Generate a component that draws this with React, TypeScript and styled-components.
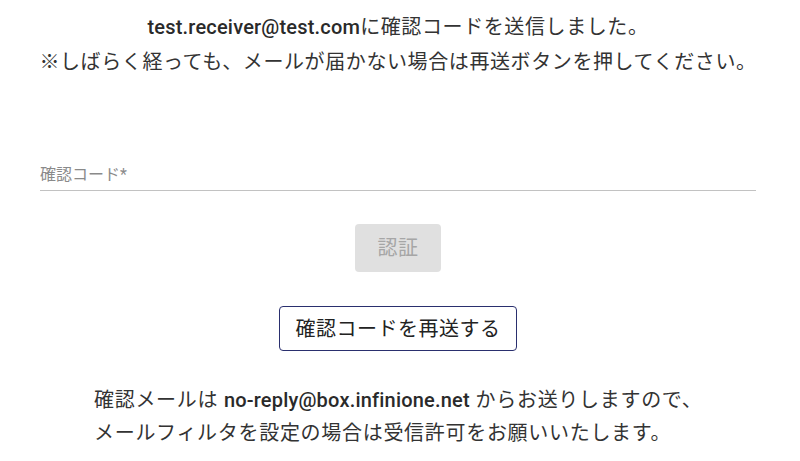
import React, { useState } from "react";
import styled, { createGlobalStyle } from "styled-components";

const GlobalStyle = createGlobalStyle`
  html, body {
    margin: 0;
    padding: 0;
    background: #ffffff;
  }

  body {
    font-family: Roboto, "Noto Sans CJK JP", sans-serif;
    color: #333333;
  }
`;

const Page = styled.div`
  width: 716px;
  margin-left: 40px;
  padding-top: 10px;
  display: flex;
  flex-direction: column;
  align-items: center;
`;

const Notice = styled.p`
  margin: 0;
  font-size: 20px;
  line-height: 35px;
  letter-spacing: 0.6px;
  text-align: center;
  white-space: nowrap;
`;

const Field = styled.label`
  align-self: stretch;
  display: block;
  margin-top: 78px;
  border-bottom: 1px solid #c2c2c2;
  position: relative;
  height: 32px;
`;

const FieldLabel = styled.span`
  position: absolute;
  left: 0;
  top: 7px;
  font-size: 16px;
  line-height: 20px;
  color: #8a8a8a;
  pointer-events: none;
`;

const FieldInput = styled.input`
  border: 0;
  outline: none;
  background: transparent;
  width: 100%;
  height: 100%;
  padding: 0;
  font: inherit;
  font-size: 16px;
  color: #333333;
`;

const Button = styled.button<{ $variant: "disabled" | "outlined" }>`
  font-family: Roboto, "Noto Sans CJK JP", sans-serif;
  font-size: 20px;
  line-height: 24px;
  letter-spacing: 0.5px;
  border-radius: 4px;
  cursor: ${({ $variant }) => ($variant === "disabled" ? "default" : "pointer")};
  background: ${({ $variant }) => ($variant === "disabled" ? "#e0e0e0" : "#ffffff")};
  color: ${({ $variant }) => ($variant === "disabled" ? "#a6a6a6" : "#222222")};
  border: ${({ $variant }) =>
    $variant === "disabled" ? "0" : "1px solid #2a2f6e"};
`;

const VerifyButton = styled(Button)`
  margin-top: 33px;
  width: 86px;
  height: 48px;
`;

const ResendButton = styled(Button)`
  margin-top: 34px;
  width: 238px;
  height: 45px;
  padding: 0;
`;

const Footnote = styled.p`
  align-self: stretch;
  margin: 33px 0 0;
  padding-left: 54px;
  font-size: 20px;
  line-height: 33px;
  letter-spacing: 0.7px;
  white-space: nowrap;
`;

const Address = styled.span`
  color: #2a2a2a;
  font-weight: 500;
  letter-spacing: 0.2px;
`;

export default function App() {
  const [code, setCode] = useState("");

  return (
    <>
      <GlobalStyle />
      <Page>
        <Notice>
          <Address>test.receiver@test.com</Address>に確認コードを送信しました。
          <br />
          ※しばらく経っても、メールが届かない場合は再送ボタンを押してください。
        </Notice>

        <Field>
          {code === "" && <FieldLabel>確認コード*</FieldLabel>}
          <FieldInput value={code} onChange={(e) => setCode(e.target.value)} />
        </Field>

        <VerifyButton $variant="disabled" disabled={code === ""}>
          認証
        </VerifyButton>

        <ResendButton $variant="outlined">確認コードを再送する</ResendButton>

        <Footnote>
          確認メールは <Address>no-reply@box.infinione.net</Address> からお送りしますので、
          <br />
          メールフィルタを設定の場合は受信許可をお願いいたします。
        </Footnote>
      </Page>
    </>
  );
}
